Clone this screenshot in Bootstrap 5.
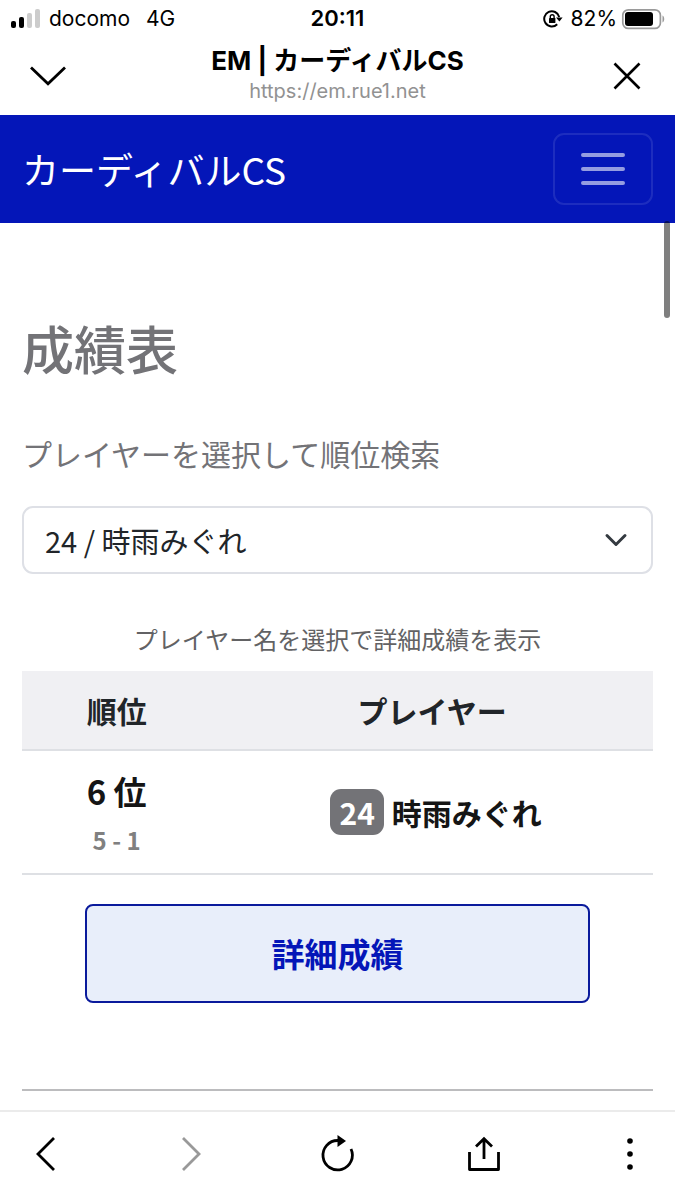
<!DOCTYPE html>
<html lang="ja">
<head>
<meta charset="utf-8">
<meta name="viewport" content="width=device-width, initial-scale=1">
<title>EM | カーディバルCS</title>
<link href="https://cdn.jsdelivr.net/npm/bootstrap@5.3.0/dist/css/bootstrap.min.css" rel="stylesheet">
<style>
  :root { --brand: #0416b8; --muted: #737377; }
  body { font-family: "Noto Sans CJK JP", sans-serif; color: #212529; background: #fff; }
  .system-ui { font-family: Inter, "Noto Sans CJK JP", sans-serif; color: #000; }
  svg { display: block; }
  .icon-btn { padding: 0; border: 0; background: none; color: #000; display: block; }

  .status-bar { display: grid; grid-template-columns: 1fr auto 1fr; height: 38px; padding: 0 10px 0 10px; font-size: 21px; line-height: 36px; }
  .clock { font-size: 22px; }
  .title-bar { display: grid; grid-template-columns: 60px 1fr 60px; height: 77px; padding: 0 18px; }
  .title-bar .icon-btn { padding-bottom: 2px; }
  .page-name { font-size: 26px; line-height: 32px; font-weight: 700; padding-top: 7px; }
  .page-url { font-size: 20px; line-height: 28px; color: #929292; }

  .site-nav { background: var(--brand); height: 108px; padding: 0 22px; }
  .site-nav .navbar-brand { font-size: 37px; line-height: 54px; }
  .site-nav .navbar-toggler { width: 100px; height: 72px; border: 2px solid rgba(255,255,255,.1); border-radius: 11px; padding: 0 26px; }

  .scroll-thumb { top: -2px; right: 5px; width: 6px; height: 97px; border-radius: 3px; background: rgba(0,0,0,.5); }
  .sheet { padding: 88px 22px 18px; }
  .sheet h1 { font-size: 52px; line-height: 74px; font-weight: 500; color: var(--muted); margin: 0 0 46px; }
  .lead-text { font-size: 30px; line-height: 44px; color: var(--muted); margin-bottom: 31px; }
  .player-select { height: 68px; font-size: 29px; line-height: 44px; padding: 10px 70px 10px 21px; border: 2px solid #dee0e6; border-radius: 11px; color: #212529; background-size: 24px 24px; background-position: right 23px center; margin-bottom: 39px; }

  .rank-table caption { font-size: 24px; line-height: 36px; padding: 8px 0 14px; color: #626264; text-align: center; }
  .rank-table { text-align: center; vertical-align: middle; margin-bottom: 29px; }
  .rank-table th, .rank-table td { border-bottom: 2px solid #dee0e4; padding: 17px 0; }
  .rank-table tbody td { padding: 12px 0; }
  .rank-table thead th { background: #f0f0f3; font-size: 30px; line-height: 44px; font-weight: 700; color: #212529; }
  .col-rank { width: 30%; }
  .rank-value { font-size: 33px; line-height: 56px; font-weight: 700; color: #151515; }
  .record { font-size: 24px; line-height: 42px; font-weight: 700; color: #808080; }
  .player { font-size: 30px; line-height: 46px; font-weight: 700; color: #151515; }
  .player-no { background: var(--muted); color: #fff; font-size: 30px; line-height: 46px; font-weight: 700; padding: 0 9px; border-radius: 11px; }
  .detail-btn { width: 80%; height: 99px; font-size: 33px; font-weight: 700; color: var(--brand); background: #e8eefa; border: 2px solid #0a1a9c; border-radius: 8px; }
  .section-rule { margin: 86px 0 0; border-top: 2px solid #bcbcbe; opacity: 1; }

  .tool-bar { height: 90px; border-top: 2px solid #ebebeb; padding: 0 26px 4px; }
</style>
</head>
<body>
<div class="d-flex flex-column min-vh-100">
  <header class="system-ui">
    <div class="status-bar">
      <div class="d-flex align-items-center">
        <svg width="31" height="20" viewBox="0 0 31 20" class="me-2" aria-hidden="true">
          <rect x="1" y="12" width="5" height="7" rx="2" fill="#000"/><rect x="9" y="8" width="5" height="11" rx="2" fill="#000"/>
          <rect x="17" y="4" width="5" height="15" rx="2" fill="#ccc"/><rect x="25" y="0" width="5" height="19" rx="2" fill="#ccc"/>
        </svg>
        <span class="me-3">docomo</span><span>4G</span>
      </div>
      <div class="clock fw-semibold">20:11</div>
      <div class="d-flex align-items-center justify-content-end">
        <svg width="20" height="18" viewBox="0 0 20 18" class="me-2" fill="none" stroke="#000" stroke-width="2" aria-hidden="true">
          <path d="M14.2 14.2A7.600 7.600 0 1 1 16.200 7"/><path d="M13 7.500h6.600l-3.200 4z" fill="#000" stroke="none"/>
          <rect x="6" y="8" width="6.4" height="5" rx=".6" fill="#000" stroke="none"/><path d="M7.300 8V6.600a1.900 1.900 0 0 1 3.800 0V8" stroke-width="1.4"/>
        </svg>
        <span class="me-1">82%</span>
        <svg width="44" height="22" viewBox="0 0 44 22" aria-hidden="true">
          <rect x="1.8" y="1.8" width="37.6" height="18.6" rx="5.5" fill="none" stroke="#9a9a9a" stroke-width="1.7"/>
          <rect x="4" y="4" width="28" height="14" rx="3" fill="#000"/><path d="M41.500 7.500c2.300 1.300 2.300 5.700 0 7z" fill="#9a9a9a"/>
        </svg>
      </div>
    </div>
    <div class="title-bar">
      <button type="button" class="icon-btn d-flex align-items-center justify-content-center" aria-label="閉じる">
        <svg width="38" height="22" viewBox="0 0 38 22" fill="none" stroke="currentColor" stroke-width="2.8"><path d="M2 2.500 19 18.800 36 2.500"/></svg>
      </button>
      <div class="text-center">
        <div class="page-name">EM | カーディバルCS</div>
        <div class="page-url">https://em.rue1.net</div>
      </div>
      <button type="button" class="icon-btn d-flex align-items-center justify-content-center" aria-label="終了">
        <svg width="28" height="28" viewBox="0 0 28 28" fill="none" stroke="currentColor" stroke-width="2.6"><path d="M1.500 1.500 26.500 26.500M26.500 1.500 1.500 26.500"/></svg>
      </button>
    </div>
  </header>

  <nav class="navbar site-nav flex-nowrap justify-content-between">
    <a class="navbar-brand text-white m-0 p-0" href="#">カーディバルCS</a>
    <button class="navbar-toggler" type="button" aria-label="メニュー">
      <svg width="44" height="36" viewBox="0 0 44 36" stroke="#fff" stroke-opacity=".58" stroke-width="4" stroke-linecap="round"><path d="M2 4h40M2 18h40M2 32h40"/></svg>
    </button>
  </nav>

  <main class="position-relative flex-grow-1">
    <div class="scroll-thumb position-absolute"></div>
    <div class="sheet">
      <h1>成績表</h1>
      <label class="lead-text d-block" for="player">プレイヤーを選択して順位検索</label>
      <select class="form-select player-select" id="player"><option>24 / 時雨みぐれ</option></select>
      <table class="table caption-top rank-table">
        <caption>プレイヤー名を選択で詳細成績を表示</caption>
        <thead><tr><th class="col-rank" scope="col">順位</th><th scope="col">プレイヤー</th></tr></thead>
        <tbody>
          <tr>
            <td><div class="rank-value">6 位</div><div class="record">5 - 1</div></td>
            <td><div class="player d-flex justify-content-center align-items-center gap-2 ps-2"><span class="player-no">24</span><span>時雨みぐれ</span></div></td>
          </tr>
        </tbody>
      </table>
      <button type="button" class="btn detail-btn d-block mx-auto">詳細成績</button>
      <hr class="section-rule">
    </div>
  </main>

  <footer class="tool-bar system-ui d-flex align-items-center justify-content-between">
    <button type="button" class="icon-btn" aria-label="戻る"><svg width="38" height="38" viewBox="0 0 38 38" fill="none" stroke="currentColor" stroke-width="2.8"><path d="M28 3 12 19 28 35"/></svg></button>
    <button type="button" class="icon-btn" aria-label="進む" disabled><svg width="38" height="38" viewBox="0 0 38 38" fill="none" stroke="#999" stroke-width="2.8"><path d="M11 3 27 19 11 35"/></svg></button>
    <button type="button" class="icon-btn" aria-label="再読み込み"><svg width="38" height="38" viewBox="0 0 38 38" fill="none" stroke="currentColor" stroke-width="2.8"><path d="M32 14A14.700 14.700 0 1 1 19 5.500"/><path d="M18.500 0v12l8.500-6z" fill="currentColor" stroke="none"/></svg></button>
    <button type="button" class="icon-btn" aria-label="共有"><svg width="38" height="38" viewBox="0 0 38 38" fill="none" stroke="currentColor" stroke-width="2.8"><path d="M4.500 17v17.500h29V17" stroke-linejoin="round"/><path d="M19 24V4M11 11.500 19 3.700 27 11.500"/></svg></button>
    <button type="button" class="icon-btn" aria-label="その他"><svg width="38" height="38" viewBox="0 0 38 38" fill="currentColor"><circle cx="19" cy="6" r="2.8"/><circle cx="19" cy="19" r="2.8"/><circle cx="19" cy="32" r="2.8"/></svg></button>
  </footer>
</div>
<script src="https://cdn.jsdelivr.net/npm/bootstrap@5.3.0/dist/js/bootstrap.bundle.min.js"></script>
</body>
</html>
